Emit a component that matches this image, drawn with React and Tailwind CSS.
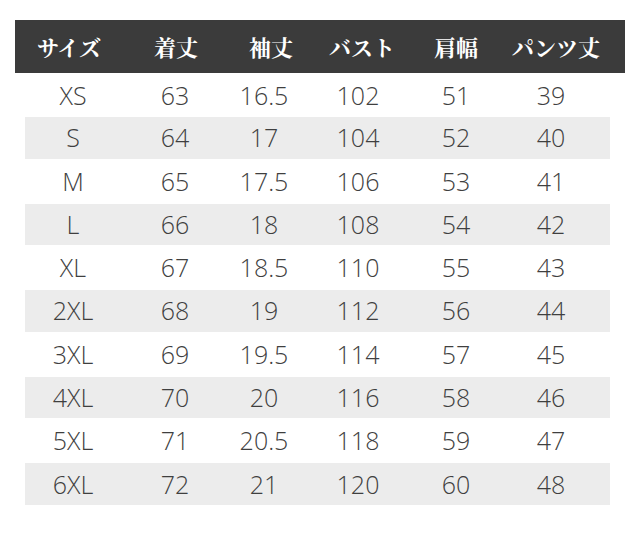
import React from "react";

const rows = [
  ["XS", "63", "16.5", "102", "51", "39"],
  ["S", "64", "17", "104", "52", "40"],
  ["M", "65", "17.5", "106", "53", "41"],
  ["L", "66", "18", "108", "54", "42"],
  ["XL", "67", "18.5", "110", "55", "43"],
  ["2XL", "68", "19", "112", "56", "44"],
  ["3XL", "69", "19.5", "114", "57", "45"],
  ["4XL", "70", "20", "116", "58", "46"],
  ["5XL", "71", "20.5", "118", "59", "47"],
  ["6XL", "72", "21", "120", "60", "48"],
];

const heads = ["サイズ", "着丈", "袖丈", "バスト", "肩幅", "パンツ丈"];

export default function App() {
  return (
    <div className="w-[640px] h-[533px] bg-white pt-[20px] overflow-hidden">
      <div
        className="ml-[15px] w-[610px] h-[53px] bg-[#3b3b3b] grid grid-cols-[108px_106px_84px_98px_90px_110px] items-center text-white font-bold text-[22px]"
        style={{ fontFamily: '"Noto Serif CJK JP", "Noto Sans CJK JP", serif' }}
      >
        {heads.map((h) => (
          <div key={h} className="text-center">{h}</div>
        ))}
      </div>
      <div
        className="ml-[25px] w-[585px] text-[#3f3f3f] text-[25px] font-[350]"
        style={{ fontFamily: '"Open Sans", "Noto Sans", sans-serif' }}
      >
        {rows.map((r, i) => (
          <div
            key={r[0]}
            className={
              "grid grid-cols-[96px_108px_70px_118px_78px_112px] items-center " +
              (i % 2 === 1 ? "bg-[#ececec] h-[41.6px]" : i === 0 ? "h-[44px]" : "h-[45px]")
            }
          >
            {r.map((c, j) => (
              <div key={j} className="text-center leading-none">{c}</div>
            ))}
          </div>
        ))}
      </div>
    </div>
  );
}
